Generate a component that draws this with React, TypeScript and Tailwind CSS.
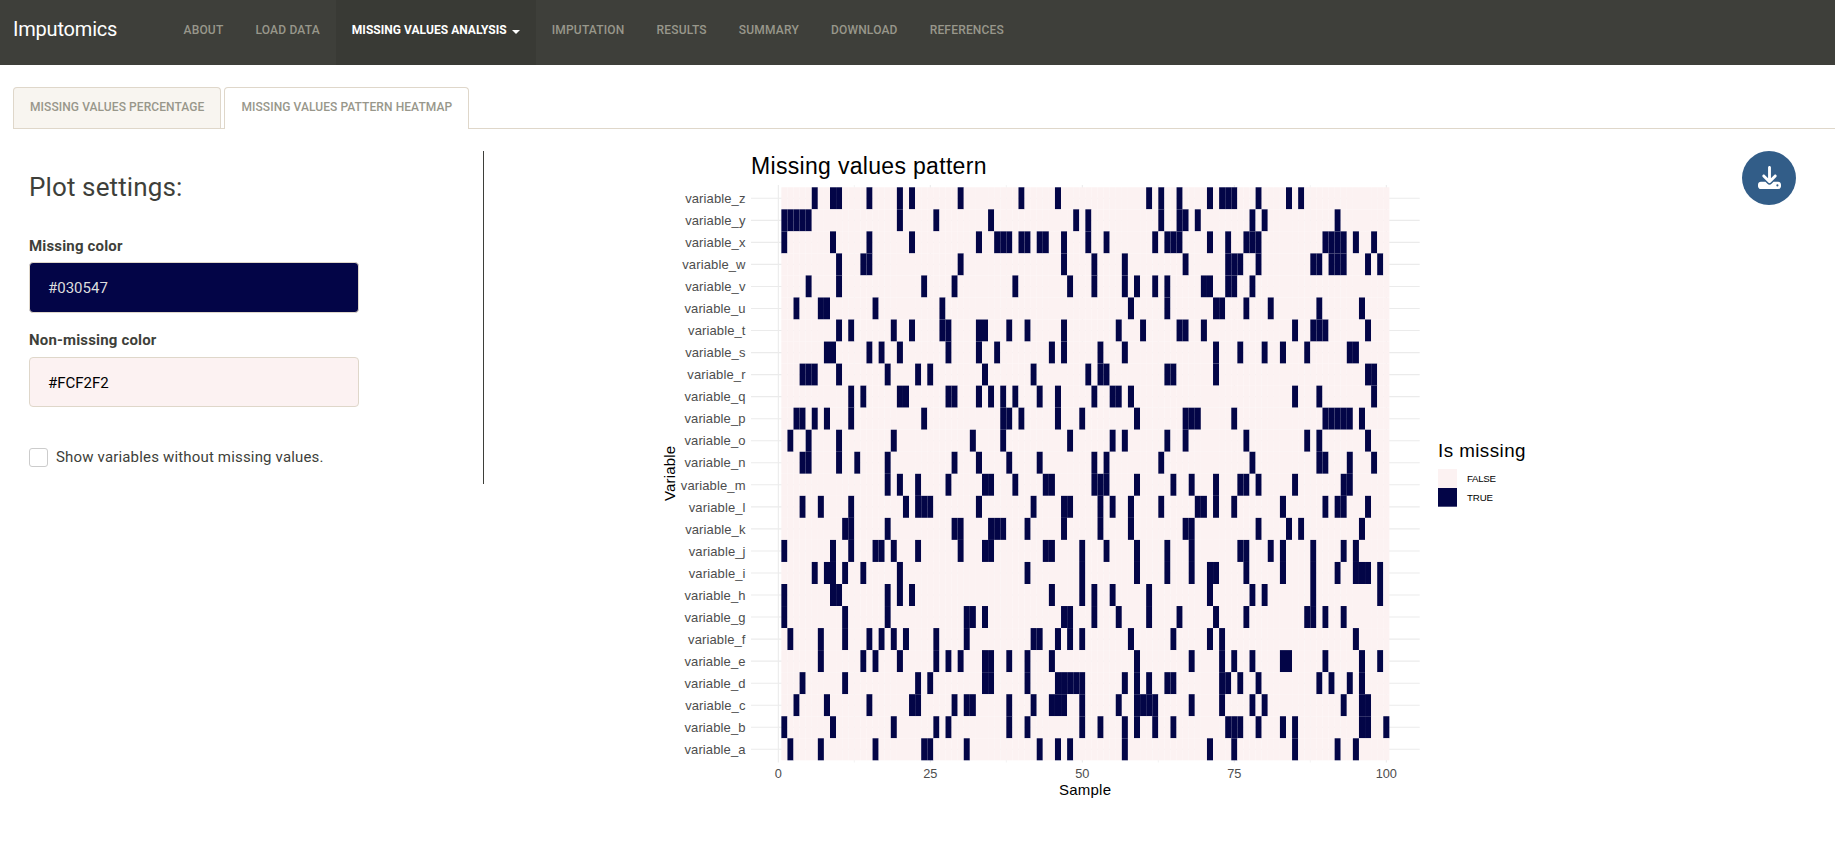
import { FaDownload } from "react-icons/fa6";

const NAV_LEFT = ["ABOUT", "LOAD DATA"];
const NAV_RIGHT = ["IMPUTATION", "RESULTS", "SUMMARY", "DOWNLOAD", "REFERENCES"];

const ROWS: { name: string; missing: number[] }[] = [
  { name: "variable_z", missing: [6, 9, 10, 15, 20, 22, 30, 40, 46, 61, 63, 66, 71, 73, 74, 75, 79, 84, 86] },
  { name: "variable_y", missing: [1, 2, 3, 4, 5, 20, 26, 35, 49, 51, 63, 66, 67, 69, 78, 80, 92] },
  { name: "variable_x", missing: [1, 9, 15, 22, 33, 36, 37, 38, 40, 41, 43, 44, 47, 51, 54, 62, 64, 65, 66, 71, 74, 77, 78, 79, 90, 91, 92, 93, 95, 98] },
  { name: "variable_w", missing: [10, 14, 15, 30, 47, 52, 57, 67, 74, 75, 76, 79, 88, 89, 91, 92, 93, 97, 99] },
  { name: "variable_v", missing: [5, 10, 24, 29, 39, 48, 52, 57, 59, 62, 64, 70, 71, 74, 75, 78] },
  { name: "variable_u", missing: [3, 7, 8, 16, 27, 58, 64, 72, 73, 77, 81, 89, 96] },
  { name: "variable_t", missing: [10, 12, 19, 22, 27, 28, 33, 34, 38, 41, 47, 56, 60, 66, 67, 70, 85, 88, 89, 90, 97] },
  { name: "variable_s", missing: [8, 9, 15, 17, 20, 28, 33, 36, 45, 47, 53, 57, 72, 76, 80, 83, 87, 94, 95] },
  { name: "variable_r", missing: [4, 5, 6, 10, 18, 23, 25, 34, 42, 51, 53, 54, 64, 65, 72, 97, 98] },
  { name: "variable_q", missing: [12, 14, 20, 21, 28, 29, 33, 35, 37, 39, 43, 46, 52, 55, 56, 58, 85, 89, 98] },
  { name: "variable_p", missing: [3, 4, 6, 8, 12, 24, 37, 38, 40, 46, 50, 59, 67, 68, 69, 75, 90, 91, 92, 93, 94, 96] },
  { name: "variable_o", missing: [2, 5, 10, 19, 32, 37, 48, 55, 57, 64, 67, 77, 87, 89, 97] },
  { name: "variable_n", missing: [4, 5, 10, 13, 18, 29, 33, 38, 43, 52, 54, 63, 78, 89, 90, 94, 98] },
  { name: "variable_m", missing: [18, 20, 23, 28, 34, 35, 39, 44, 45, 52, 53, 54, 59, 65, 68, 72, 76, 77, 79, 85, 93, 94] },
  { name: "variable_l", missing: [4, 7, 12, 21, 23, 24, 25, 33, 42, 47, 48, 53, 55, 58, 63, 69, 70, 72, 75, 83, 90, 92, 93, 97] },
  { name: "variable_k", missing: [11, 12, 18, 29, 30, 35, 36, 37, 41, 47, 53, 58, 67, 68, 79, 84, 86, 96] },
  { name: "variable_j", missing: [1, 9, 12, 16, 17, 19, 23, 30, 34, 35, 44, 45, 50, 54, 59, 64, 68, 76, 77, 81, 83, 88, 93, 95] },
  { name: "variable_i", missing: [6, 8, 9, 11, 14, 20, 41, 50, 59, 64, 68, 71, 72, 77, 83, 88, 92, 95, 96, 97, 99] },
  { name: "variable_h", missing: [1, 9, 10, 18, 20, 22, 45, 50, 52, 55, 61, 71, 78, 80, 88, 99] },
  { name: "variable_g", missing: [1, 11, 18, 31, 32, 34, 47, 48, 52, 56, 61, 66, 72, 77, 87, 88, 90, 93] },
  { name: "variable_f", missing: [2, 7, 11, 15, 17, 19, 21, 26, 31, 42, 43, 46, 48, 50, 58, 65, 71, 73, 95] },
  { name: "variable_e", missing: [7, 14, 16, 20, 26, 28, 30, 34, 35, 38, 41, 45, 59, 68, 73, 75, 78, 83, 84, 90, 96, 99] },
  { name: "variable_d", missing: [4, 11, 23, 25, 34, 35, 41, 46, 47, 48, 49, 50, 57, 59, 61, 64, 65, 73, 74, 76, 79, 89, 91, 94, 96] },
  { name: "variable_c", missing: [3, 8, 15, 22, 23, 29, 31, 32, 38, 42, 45, 46, 47, 50, 56, 59, 60, 61, 62, 68, 73, 78, 80, 93, 96, 97] },
  { name: "variable_b", missing: [1, 9, 19, 26, 28, 38, 41, 50, 53, 57, 59, 62, 65, 74, 75, 76, 79, 83, 85, 96, 97, 100] },
  { name: "variable_a", missing: [2, 7, 16, 24, 25, 31, 43, 46, 48, 57, 71, 75, 85, 92, 95] },
];

const SAMPLES = Array.from({ length: 100 }, (_, i) => i + 1);

// Plot geometry, in units of the 900x660 drawing.
const CELL_W = 6.08;
const CELL_H = 22.04;
const LEFT = 131.36;
const TOP = 47.28;
const xAt = (sample: number) => LEFT + (sample - 0.5) * CELL_W;
const PANEL = { x1: 101, x2: 769.7, y1: 45.1, y2: 622.5 };

function Heatmap() {
  return (
    <svg width="900" height="660" viewBox="0 0 900 660" className="block shrink-0 font-['Liberation_Sans',Arial,sans-serif]">
      <text x="101" y="34" fontSize="23" textLength="235.5" className="fill-black">Missing values pattern</text>

      {[12.5, 37.5, 62.5, 87.5].map((v) => (
        <line key={v} x1={xAt(v)} x2={xAt(v)} y1={PANEL.y1} y2={PANEL.y2} stroke="#ebebeb" strokeWidth="0.6" />
      ))}
      {[0, 25, 50, 75, 100].map((v) => (
        <line key={v} x1={xAt(v)} x2={xAt(v)} y1={PANEL.y1} y2={PANEL.y2} stroke="#ebebeb" strokeWidth="1.1" />
      ))}
      {ROWS.map((row, r) => (
        <line
          key={row.name}
          x1={PANEL.x1}
          x2={PANEL.x2}
          y1={TOP + (r + 0.5) * CELL_H}
          y2={TOP + (r + 0.5) * CELL_H}
          stroke="#ebebeb"
          strokeWidth="1.1"
        />
      ))}

      {ROWS.map((row, r) => (
        <g key={row.name}>
          {SAMPLES.map((s) => (
            <rect
              key={s}
              x={LEFT + (s - 1) * CELL_W}
              y={TOP + r * CELL_H}
              width={CELL_W}
              height={CELL_H}
              fill={row.missing.includes(s) ? "#030547" : "#fcf2f2"}
            />
          ))}
          <text
            x="95.6"
            y={TOP + (r + 0.5) * CELL_H + 4.7}
            fontSize="13"
            textAnchor="end"
            letterSpacing="0.12"
            fill="#4d4d4d"
          >
            {row.name}
          </text>
        </g>
      ))}

      {[0, 25, 50, 75, 100].map((v) => (
        <text key={v} x={xAt(v)} y="638" fontSize="12.8" textAnchor="middle" fill="#4d4d4d">
          {v}
        </text>
      ))}
      <text x="435" y="655" fontSize="15" textAnchor="middle" textLength="52" className="fill-black">Sample</text>
      <text transform="translate(25 333.5) rotate(-90)" fontSize="15" textAnchor="middle" textLength="55" className="fill-black">
        Variable
      </text>

      <text x="788" y="316.7" fontSize="18.8" textLength="87.5" className="fill-black">Is missing</text>
      <rect x="788" y="329" width="19" height="19" fill="#fcf2f2" />
      <rect x="788" y="348" width="19" height="18.7" fill="#030547" />
      <text x="817" y="342" fontSize="9.7" textLength="29" className="fill-black">FALSE</text>
      <text x="817" y="361" fontSize="9.7" textLength="26" className="fill-black">TRUE</text>
    </svg>
  );
}

function NavItem({ label }: { label: string }) {
  return <a className="flex px-4 pt-[22px] tracking-[0.19px]">{label}</a>;
}

export default function App() {
  return (
    <div className="h-[850px] w-full overflow-hidden bg-white font-[Roboto,sans-serif] text-[#3e3f3a]">
      <nav className="flex h-[65px] bg-[#3e3f3a] pl-[13px] text-xs leading-[17px] font-medium text-[#98978b]">
        <div className="w-[154.5px] pt-[19px] text-xl leading-5 font-normal tracking-[-0.2px] text-white">Imputomics</div>
        {NAV_LEFT.map((l) => (
          <NavItem key={l} label={l} />
        ))}
        <a className="flex bg-[#393a35] px-4 pt-[22px] font-bold tracking-[0.04px] text-white">
          MISSING VALUES ANALYSIS
          <span className="mt-[8px] ml-[5px] h-0 w-0 border-x-[4.5px] border-t-[4.5px] border-x-transparent border-t-white" />
        </a>
        {NAV_RIGHT.map((l) => (
          <NavItem key={l} label={l} />
        ))}
      </nav>

      <div className="mt-[22px] ml-[13px] flex h-[42px] gap-[3px] border-b border-[#dfd7ca] text-xs leading-[17px] font-medium tracking-[0.08px] text-[#98978b]">
        <a className="h-[41px] rounded-t border border-b-0 border-[#dfd7ca] bg-[#f8f5f0] px-4 pt-[11px]">MISSING VALUES PERCENTAGE</a>
        <a className="h-[42px] rounded-t border border-b-0 border-[#dfd7ca] bg-white px-4 pt-[11px]">MISSING VALUES PATTERN HEATMAP</a>
      </div>

      <main className="mt-[22px] flex items-start">
        <section className="h-[333px] w-[484px] border-r border-[#3e3f3a] pl-[29px] text-[15px]">
          <h2 className="pt-[21px] text-[26px] leading-[30px] tracking-[0.12px]">Plot settings:</h2>
          <label className="mt-[34px] block leading-5 font-bold tracking-[0.17px]">Missing color</label>
          <div className="mt-[6px] flex h-[51px] w-[330px] items-center rounded border border-[#dfd7ca] bg-[#030547] px-[18px] pt-px text-[#dddddd]">#030547</div>
          <label className="mt-[17px] block leading-5 font-bold tracking-[0.17px]">Non-missing color</label>
          <div className="mt-[7px] flex h-[50px] w-[330px] items-center rounded border border-[#dfd7ca] bg-[#fcf2f2] px-[18px] pt-[2px] text-black">#FCF2F2</div>
          <div className="mt-[41px] flex items-center gap-[8px] leading-[19px] tracking-[0.17px]">
            <span className="h-[19px] w-[19px] rounded-[3px] border border-[#ccc] bg-white" />
            Show variables without missing values.
          </div>
        </section>

        <section className="-mt-[11px] ml-[166px]">
          <Heatmap />
        </section>

        <button className="ml-[192px] flex h-[54px] w-[54px] items-center justify-center rounded-full bg-[#325d88] text-white">
          <FaDownload size={23} className="-mt-0.5" />
        </button>
      </main>
    </div>
  );
}
